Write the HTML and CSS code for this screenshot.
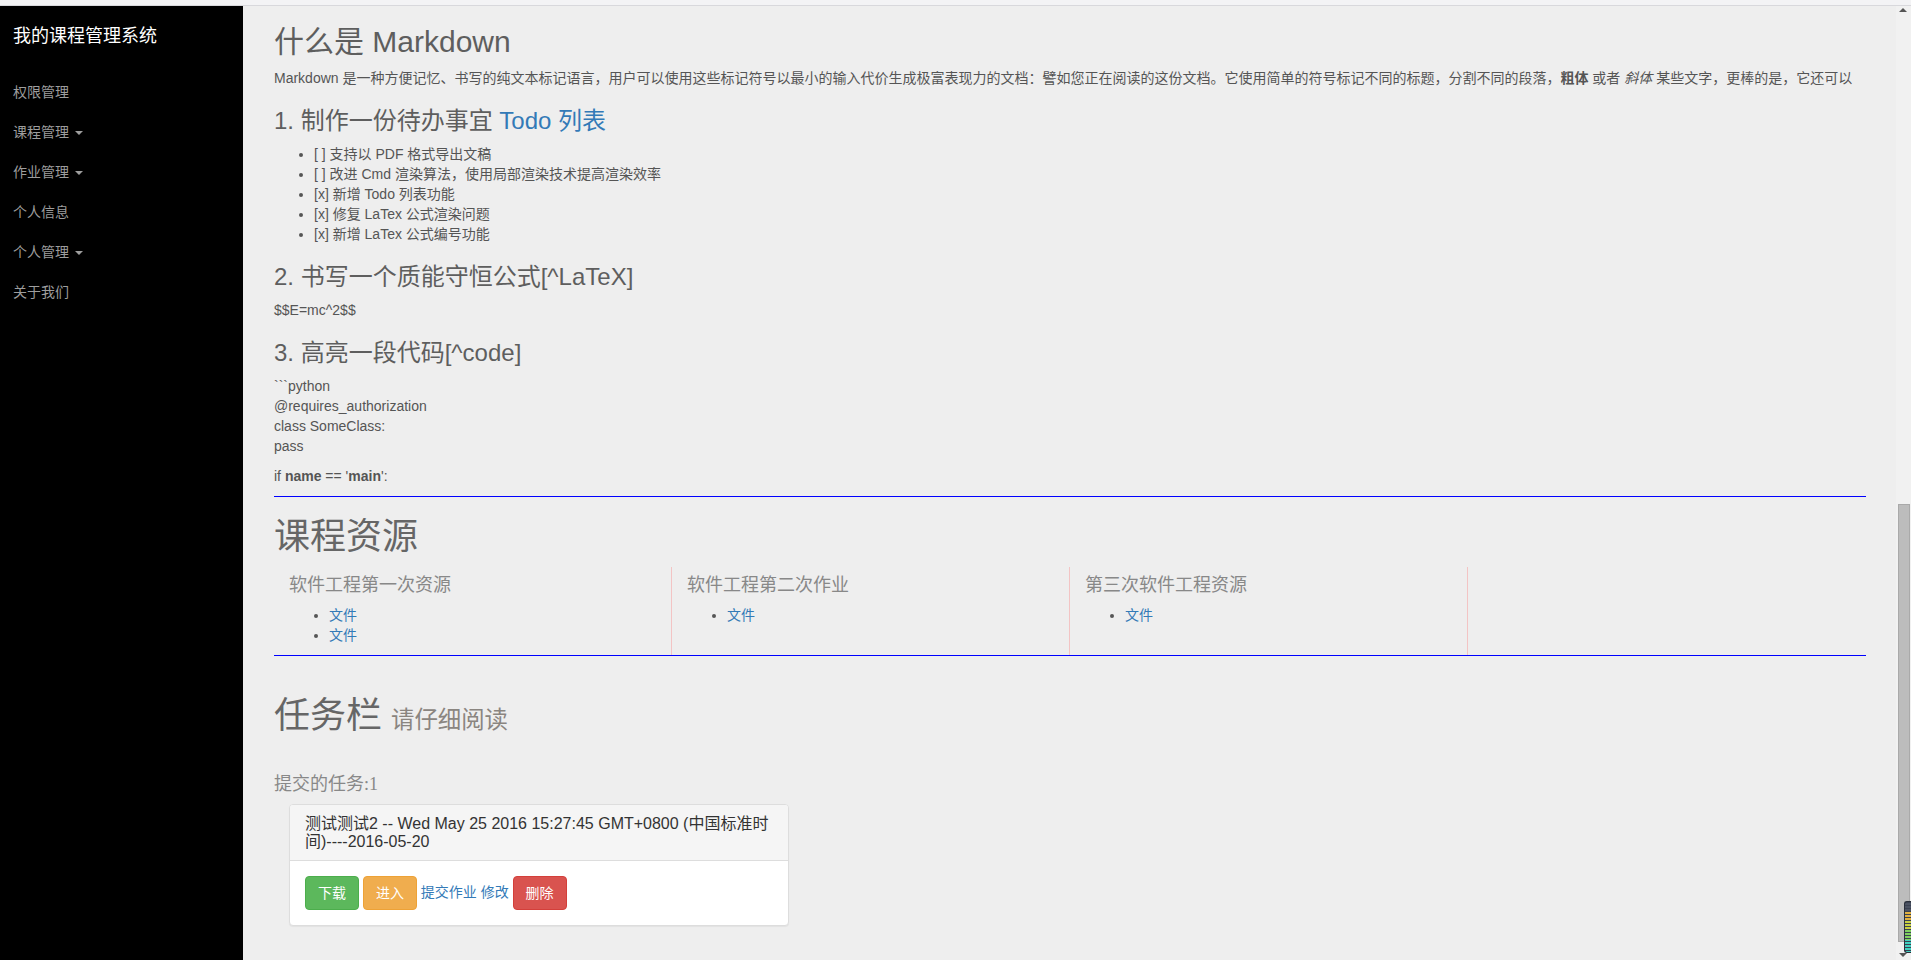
FILE: index.html
```html
<!DOCTYPE html>
<html lang="zh-CN">
<head>
<meta charset="utf-8">
<title>我的课程管理系统</title>
<link rel="stylesheet" href="styles.css">
</head>
<body>
<div class="topbar"></div>
<div class="app">
  <aside class="sidebar">
    <div class="brand">我的课程管理系统</div>
    <ul class="nav">
      <li>权限管理</li>
      <li>课程管理 <span class="caret"></span></li>
      <li>作业管理 <span class="caret"></span></li>
      <li>个人信息</li>
      <li>个人管理 <span class="caret"></span></li>
      <li>关于我们</li>
    </ul>
  </aside>
  <main class="main">
    <h2 class="md-title">什么是 Markdown</h2>
    <p class="intro">Markdown 是一种方便记忆、书写的纯文本标记语言，用户可以使用这些标记符号以最小的输入代价生成极富表现力的文档：譬如您正在阅读的这份文档。它使用简单的符号标记不同的标题，分割不同的段落，<strong>粗体</strong> 或者 <em>斜体</em> 某些文字，更棒的是，它还可以</p>
    <h3 class="md-sub">1. 制作一份待办事宜 <a href="#">Todo 列表</a></h3>
    <ul class="todo">
      <li>[ ] 支持以 PDF 格式导出文稿</li>
      <li>[ ] 改进 Cmd 渲染算法，使用局部渲染技术提高渲染效率</li>
      <li>[x] 新增 Todo 列表功能</li>
      <li>[x] 修复 LaTex 公式渲染问题</li>
      <li>[x] 新增 LaTex 公式编号功能</li>
    </ul>
    <h3 class="md-sub">2. 书写一个质能守恒公式[^LaTeX]</h3>
    <p>$$E=mc^2$$</p>
    <h3 class="md-sub">3. 高亮一段代码[^code]</h3>
    <p>```python<br>@requires_authorization<br>class SomeClass:<br>pass</p>
    <p>if <strong>name</strong> == '<strong>main</strong>':</p>
    <hr class="rule">
    <h1 class="serif big">课程资源</h1>
    <div class="resources">
      <div class="res-col">
        <h4 class="serif res-title">软件工程第一次资源</h4>
        <ul class="files"><li><a href="#">文件</a></li><li><a href="#">文件</a></li></ul>
      </div>
      <div class="res-col">
        <h4 class="serif res-title">软件工程第二次作业</h4>
        <ul class="files"><li><a href="#">文件</a></li></ul>
      </div>
      <div class="res-col">
        <h4 class="serif res-title">第三次软件工程资源</h4>
        <ul class="files"><li><a href="#">文件</a></li></ul>
      </div>
      <div class="res-empty"></div>
    </div>
    <hr class="rule rule-end">
    <div class="page-header">
      <h1 class="serif big">任务栏 <small>请仔细阅读</small></h1>
    </div>
    <h4 class="serif count">提交的任务:1</h4>
    <div class="panel">
      <div class="panel-heading">
        <h3 class="panel-title">测试测试2 -- Wed May 25 2016 15:27:45 GMT+0800 (中国标准时间)----2016-05-20</h3>
      </div>
      <div class="panel-body">
        <a class="btn btn-success" href="#">下载</a>
        <a class="btn btn-warning" href="#">进入</a>
        <a href="#">提交作业</a> <a href="#">修改</a>
        <a class="btn btn-danger" href="#">删除</a>
      </div>
    </div>
  </main>
  <div class="scrollbar">
    <span class="scroll-up"></span>
    <div class="thumb"></div>
    <span class="scroll-down"></span>
    <div class="meter"></div>
  </div>
</div>
</body>
</html>
```

FILE: styles.css
```css
* { box-sizing: border-box; }
html, body { margin: 0; height: 100%; }
body {
  font-family: "Liberation Sans", "Noto Sans CJK SC", sans-serif;
  font-size: 14px;
  line-height: 20px;
  color: #555;
  background: #eee;
  overflow: hidden;
}
a { color: #337ab7; text-decoration: none; }

.topbar {
  height: 6px;
  background: #f3f3f5;
  border-bottom: 1px solid #d8d8dc;
}
.app { display: flex; height: 954px; }

/* sidebar */
.sidebar {
  width: 243px;
  flex: none;
  background: #000;
  padding: 20px 13px 0;
}
.brand { color: #fff; font-size: 18px; line-height: 20px; }
.nav { list-style: none; margin: 26px 0 0; padding: 0; }
.nav li { color: #9d9d9d; line-height: 20px; padding: 10px 0; }
.caret {
  display: inline-block;
  width: 0; height: 0;
  margin-left: 2px;
  vertical-align: middle;
  border-top: 4px solid #9d9d9d;
  border-left: 4px solid transparent;
  border-right: 4px solid transparent;
}

/* main */
.main {
  flex: 1;
  min-width: 0;
  padding: 0 30px 0 31px;
  overflow: hidden;
}
h1, h2, h3, h4 { font-weight: normal; color: #5e5e5e; }
p { margin: 0 0 10px; }
.md-title { font-size: 30px; line-height: 33px; margin: 19px 0 10px; }
.intro { white-space: nowrap; overflow: hidden; font-size: 14px; }
.md-sub { font-size: 24px; line-height: 26px; margin: 20px 0 10px; }
.todo { margin: 0 0 10px; padding-left: 40px; }
.rule { border: 0; border-top: 1px solid #0000ff; margin: 10px 0 20px; height: 0; }
.rule-end { margin: 0 0 40px; }

.serif { font-family: "Liberation Serif", "Noto Sans CJK SC", serif; }
.big { font-size: 36px; line-height: 40px; margin: 20px 0 10px; color: #666; }
.big small { font-size: 65%; color: #8a8580; font-weight: normal; }

.resources { display: grid; grid-template-columns: repeat(4, 1fr); }
.res-col { border-right: 1px solid #f3c4c4; padding: 0 15px; }
.res-title { font-size: 18px; line-height: 20px; margin: 8px 0 10px; color: #888; }
.files { margin: 0 0 10px; padding-left: 40px; }

.page-header { margin: 0 0 15px; padding-bottom: 9px; }
.page-header .big { margin: 0 0 10px; }
.count { font-size: 18px; line-height: 20px; margin: 0 0 10px; color: #888; }

.panel {
  width: 500px;
  margin-left: 15px;
  background: #fff;
  border: 1px solid #ddd;
  border-radius: 4px;
  box-shadow: 0 1px 1px rgba(0,0,0,.05);
}
.panel-heading {
  background: #f5f5f5;
  padding: 10px 15px;
  border-bottom: 1px solid #ddd;
  border-radius: 3px 3px 0 0;
}
.panel-title { margin: 0; font-size: 16px; line-height: 1.1; color: #333; }
.panel-body { padding: 15px; }
.btn {
  display: inline-block;
  padding: 6px 12px;
  font-size: 14px;
  line-height: 20px;
  border: 1px solid transparent;
  border-radius: 4px;
  color: #fff;
  vertical-align: middle;
}
.btn-success { background: #5cb85c; border-color: #4cae4c; }
.btn-warning { background: #f0ad4e; border-color: #eea236; }
.btn-danger { background: #d9534f; border-color: #d43f3a; }

/* scrollbar */
.scrollbar {
  width: 15px;
  flex: none;
  background: #f1f1f1;
  position: relative;
  padding: 498px 1px 0 2px;
}
.thumb { height: 438px; background: #bcbcbc; border: 1px solid #a9a9a9; }
.scroll-up {
  position: absolute; top: 2px; left: 3px;
  width: 0; height: 0;
  border-bottom: 4px solid #555;
  border-left: 4px solid transparent;
  border-right: 4px solid transparent;
}
.scroll-down {
  position: absolute; bottom: 3px; left: 3px;
  width: 0; height: 0;
  border-top: 4px solid #555;
  border-left: 4px solid transparent;
  border-right: 4px solid transparent;
}
.meter {
  position: absolute; right: 0; bottom: 7px;
  width: 7px; height: 52px;
  background: #3b4252;
  border-radius: 3px 0 0 3px;
  border: 1px solid #2a2f3a;
  border-right: 0;
  background-image: repeating-linear-gradient(#3b4252 0 1px, transparent 1px 3px),
    linear-gradient(#4b5262 0 20%, #e0b040 20% 35%, #c8d040 35% 55%, #80d060 55% 75%, #40d0c0 75% 100%);
}
```
